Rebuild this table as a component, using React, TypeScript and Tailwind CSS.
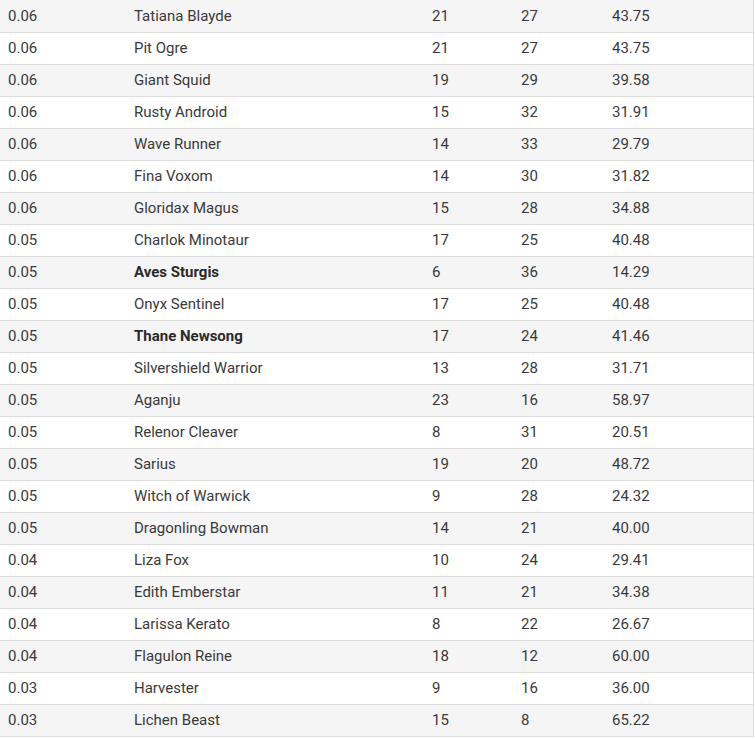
const rows: [string, string, number, number, string, boolean?][] = [
  ["0.06", "Tatiana Blayde", 21, 27, "43.75"],
  ["0.06", "Pit Ogre", 21, 27, "43.75"],
  ["0.06", "Giant Squid", 19, 29, "39.58"],
  ["0.06", "Rusty Android", 15, 32, "31.91"],
  ["0.06", "Wave Runner", 14, 33, "29.79"],
  ["0.06", "Fina Voxom", 14, 30, "31.82"],
  ["0.06", "Gloridax Magus", 15, 28, "34.88"],
  ["0.05", "Charlok Minotaur", 17, 25, "40.48"],
  ["0.05", "Aves Sturgis", 6, 36, "14.29", true],
  ["0.05", "Onyx Sentinel", 17, 25, "40.48"],
  ["0.05", "Thane Newsong", 17, 24, "41.46", true],
  ["0.05", "Silvershield Warrior", 13, 28, "31.71"],
  ["0.05", "Aganju", 23, 16, "58.97"],
  ["0.05", "Relenor Cleaver", 8, 31, "20.51"],
  ["0.05", "Sarius", 19, 20, "48.72"],
  ["0.05", "Witch of Warwick", 9, 28, "24.32"],
  ["0.05", "Dragonling Bowman", 14, 21, "40.00"],
  ["0.04", "Liza Fox", 10, 24, "29.41"],
  ["0.04", "Edith Emberstar", 11, 21, "34.38"],
  ["0.04", "Larissa Kerato", 8, 22, "26.67"],
  ["0.04", "Flagulon Reine", 18, 12, "60.00"],
  ["0.03", "Harvester", 9, 16, "36.00"],
  ["0.03", "Lichen Beast", 15, 8, "65.22"],
];

export default function App() {
  return (
    <div className="w-[755px] h-[739px] bg-white overflow-hidden font-['Roboto',sans-serif] text-[15px] text-[#3a3a3a]">
      <div className="w-[754px] border-r border-[#dddddd] bg-[#f5f5f5] pt-px">
        {rows.map(([ratio, name, w, l, pct, bold], i) => (
          <div
            key={name}
            className={`flex h-[32px] items-center border-b border-[#dddddd] ${i % 2 === 0 ? "bg-[#f5f5f5]" : "bg-white"}`}
          >
            <div className="w-[126px] pl-2">{ratio}</div>
            <div className={`w-[298px] pl-2 ${bold ? "font-bold text-[#2a2a2a]" : ""}`}>{name}</div>
            <div className="w-[89px] pl-2">{w}</div>
            <div className="w-[91px] pl-2">{l}</div>
            <div className="flex-1 pl-2">{pct}</div>
          </div>
        ))}
      </div>
    </div>
  );
}
